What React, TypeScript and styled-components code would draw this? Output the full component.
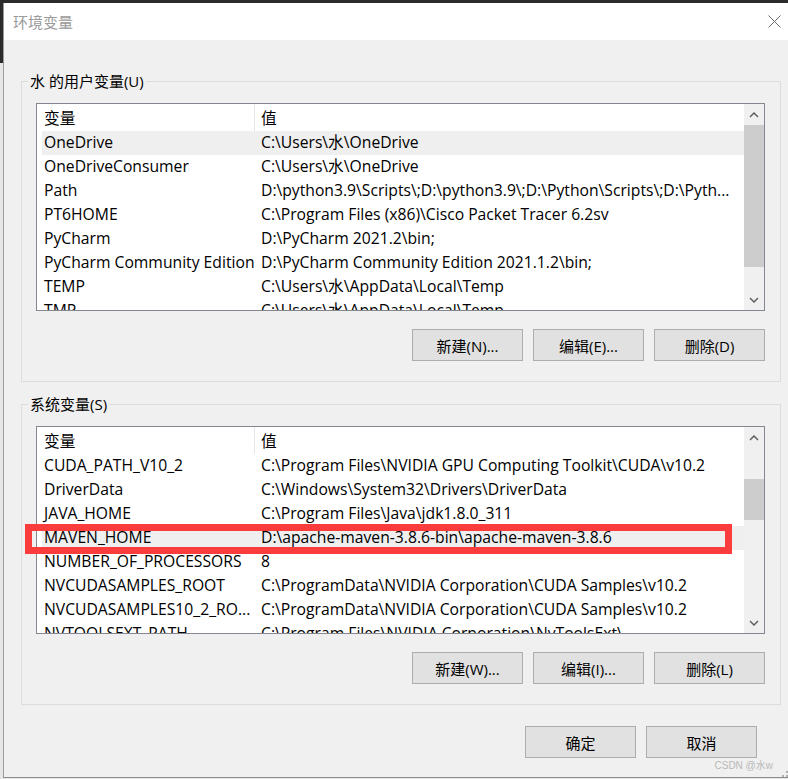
import styled, { createGlobalStyle } from "styled-components";

const GlobalStyle = createGlobalStyle`
  html, body {
    margin: 0;
    padding: 0;
  }
  body {
    width: 788px;
    height: 779px;
    overflow: hidden;
    font-family: "Open Sans", "Noto Sans CJK SC", sans-serif;
    font-size: 15px;
    color: #000;
  }
  * {
    box-sizing: border-box;
  }
`;

const Screen = styled.div`
  display: flex;
  width: 788px;
  height: 779px;
  padding-top: 3px;
  background: linear-gradient(#2b2b2b 0 63px, #e6e6e6 63px);
`;

const Window = styled.div`
  position: relative;
  flex: 1;
  margin-left: 3px;
  display: flex;
  flex-direction: column;
  background: #f0f0f0;
  border-left: 1px solid #9c9c9c;
  border-bottom: 1px solid #8c8c8c;
  height: 775px;
`;

const TitleBar = styled.div`
  height: 37px;
  flex-shrink: 0;
  display: flex;
  align-items: center;
  justify-content: space-between;
  padding: 0 7px 0 9px;
  background: #fff;
  color: #9a9a9a;
`;

const Body = styled.div`
  display: flex;
  flex-direction: column;
  padding: 0 7px 0 17px;
`;

const Group = styled.fieldset<{ $top: number }>`
  margin: ${(p) => p.$top}px 0 0 0;
  padding: 12px 15px 20px 14px;
  border: 1px solid #dcdcdc;
  min-width: 0;
`;

const Legend = styled.legend`
  margin-left: -8px;
  padding: 0 2px;
  line-height: 20px;
  height: 20px;
`;

const ListFrame = styled.div`
  position: relative;
  height: 208px;
  display: flex;
  background: #fff;
  border: 1px solid #828790;
  font-size: 15.7px;
`;

const ListContent = styled.div`
  flex: 1;
  overflow: hidden;
`;

const HeaderRow = styled.div`
  display: grid;
  grid-template-columns: 218px 1fr;
  height: 27px;
  align-items: stretch;
`;

const HeaderCell = styled.div<{ $first?: boolean }>`
  display: flex;
  align-items: center;
  padding-left: ${(p) => (p.$first ? 7 : 6)}px;
  padding-bottom: 1px;
  border-right: ${(p) => (p.$first ? "1px solid #e5e5e5" : "none")};
  white-space: nowrap;
`;

const Row = styled.div<{ $active?: boolean }>`
  display: grid;
  grid-template-columns: 213px 1fr;
  height: 24px;
  line-height: 23px;
  margin-left: 5px;
  background: ${(p) => (p.$active ? "#efefef" : "transparent")};
  white-space: nowrap;
`;

const Cell = styled.div<{ $first?: boolean }>`
  padding-left: ${(p) => (p.$first ? 2 : 6)}px;
  overflow: hidden;
`;

const ScrollBar = styled.div`
  width: 20px;
  flex-shrink: 0;
  display: flex;
  flex-direction: column;
  background: #f0f0f0;
`;

const ArrowBox = styled.div`
  height: 21px;
  flex-shrink: 0;
  display: flex;
  align-items: center;
  justify-content: center;
`;

const Track = styled.div`
  flex: 1;
`;

const Thumb = styled.div<{ $top: number; $height: number }>`
  margin-top: ${(p) => p.$top}px;
  height: ${(p) => p.$height}px;
  background: #cdcdcd;
`;

const ButtonRow = styled.div<{ $top: number; $right?: number }>`
  display: flex;
  justify-content: flex-end;
  gap: 10px;
  margin-top: ${(p) => p.$top}px;
  padding-right: ${(p) => p.$right ?? 0}px;
`;

const Button = styled.button`
  width: 111px;
  height: 32px;
  padding: 0;
  background: #e1e1e1;
  border: 1px solid #adadad;
  font-family: inherit;
  font-size: 15px;
  color: #000;
`;

const RedMark = styled.div`
  position: absolute;
  left: -12px;
  top: 97px;
  width: 707px;
  height: 30px;
  border: 7px solid #fa3c3c;
  pointer-events: none;
`;

const Watermark = styled.div`
  position: absolute;
  right: 15px;
  bottom: 5px;
  font-size: 10px;
  color: #b8b8b8;
  font-family: "Liberation Sans", "Noto Sans CJK SC", sans-serif;
`;

const Grip = styled.svg`
  position: absolute;
  right: 0;
  bottom: 0;
`;

const Chevron = ({ up }: { up?: boolean }) => (
  <svg width="10" height="6" viewBox="0 0 10 6">
    <polyline
      points={up ? "1,5 5,1 9,5" : "1,1 5,5 9,1"}
      fill="none"
      stroke="#606060"
      strokeWidth="1.5"
    />
  </svg>
);

type Entry = [string, string];

const userVars: Entry[] = [
  ["OneDrive", "C:\\Users\\水\\OneDrive"],
  ["OneDriveConsumer", "C:\\Users\\水\\OneDrive"],
  ["Path", "D:\\python3.9\\Scripts\\;D:\\python3.9\\;D:\\Python\\Scripts\\;D:\\Pyth..."],
  ["PT6HOME", "C:\\Program Files (x86)\\Cisco Packet Tracer 6.2sv"],
  ["PyCharm", "D:\\PyCharm 2021.2\\bin;"],
  ["PyCharm Community Edition", "D:\\PyCharm Community Edition 2021.1.2\\bin;"],
  ["TEMP", "C:\\Users\\水\\AppData\\Local\\Temp"],
  ["TMP", "C:\\Users\\水\\AppData\\Local\\Temp"],
];

const systemVars: Entry[] = [
  ["CUDA_PATH_V10_2", "C:\\Program Files\\NVIDIA GPU Computing Toolkit\\CUDA\\v10.2"],
  ["DriverData", "C:\\Windows\\System32\\Drivers\\DriverData"],
  ["JAVA_HOME", "C:\\Program Files\\Java\\jdk1.8.0_311"],
  ["MAVEN_HOME", "D:\\apache-maven-3.8.6-bin\\apache-maven-3.8.6"],
  ["NUMBER_OF_PROCESSORS", "8"],
  ["NVCUDASAMPLES_ROOT", "C:\\ProgramData\\NVIDIA Corporation\\CUDA Samples\\v10.2"],
  ["NVCUDASAMPLES10_2_RO...", "C:\\ProgramData\\NVIDIA Corporation\\CUDA Samples\\v10.2"],
  ["NVTOOLSEXT_PATH", "C:\\Program Files\\NVIDIA Corporation\\NvToolsExt\\"],
];

const VarList = ({
  entries,
  active,
  thumbTop,
  thumbHeight,
  marked,
}: {
  entries: Entry[];
  active: number;
  thumbTop: number;
  thumbHeight: number;
  marked?: boolean;
}) => (
  <ListFrame>
    <ListContent>
      <HeaderRow>
        <HeaderCell $first>变量</HeaderCell>
        <HeaderCell>值</HeaderCell>
      </HeaderRow>
      {entries.map(([name, value], i) => (
        <Row key={name} $active={i === active}>
          <Cell $first>{name}</Cell>
          <Cell>{value}</Cell>
        </Row>
      ))}
    </ListContent>
    <ScrollBar>
      <ArrowBox>
        <Chevron up />
      </ArrowBox>
      <Track>
        <Thumb $top={thumbTop} $height={thumbHeight} />
      </Track>
      <ArrowBox>
        <Chevron />
      </ArrowBox>
    </ScrollBar>
    {marked && <RedMark />}
  </ListFrame>
);

export default function App() {
  return (
    <>
      <GlobalStyle />
      <Screen>
        <Window>
          <TitleBar>
            <span>环境变量</span>
            <svg width="13" height="13" viewBox="0 0 13 13">
              <path d="M0.5 0.5 L12.5 12.5 M12.5 0.5 L0.5 12.5" stroke="#6a6a6a" strokeWidth="1" />
            </svg>
          </TitleBar>
          <Body>
            <Group $top={31}>
              <Legend>水 的用户变量(U)</Legend>
              <VarList entries={userVars} active={0} thumbTop={0} thumbHeight={142} />
              <ButtonRow $top={18}>
                <Button>新建(N)...</Button>
                <Button>编辑(E)...</Button>
                <Button>删除(D)</Button>
              </ButtonRow>
            </Group>
            <Group $top={12}>
              <Legend>系统变量(S)</Legend>
              <VarList
                entries={systemVars}
                active={3}
                thumbTop={31}
                thumbHeight={41}
                marked
              />
              <ButtonRow $top={18}>
                <Button>新建(W)...</Button>
                <Button>编辑(I)...</Button>
                <Button>删除(L)</Button>
              </ButtonRow>
            </Group>
            <ButtonRow $top={21} $right={24}>
              <Button>确定</Button>
              <Button>取消</Button>
            </ButtonRow>
          </Body>
          <Watermark>CSDN @水w</Watermark>
          <Grip width="6" height="6" viewBox="0 0 6 6">
            <rect x="4" y="0" width="2" height="2" fill="#b0b0b0" />
            <rect x="0" y="4" width="2" height="2" fill="#b0b0b0" />
            <rect x="4" y="4" width="2" height="2" fill="#b0b0b0" />
          </Grip>
        </Window>
      </Screen>
    </>
  );
}
